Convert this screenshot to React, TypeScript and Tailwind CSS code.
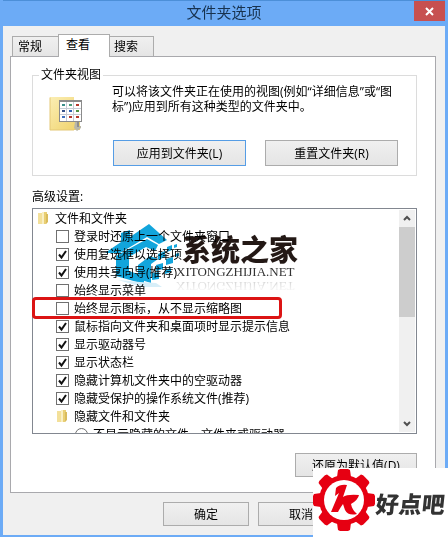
import { ReactNode } from "react";

type Item = { label: string; checked: boolean };

const items: Item[] = [
  { label: "登录时还原上一个文件夹窗口", checked: false },
  { label: "使用复选框以选择项", checked: true },
  { label: "使用共享向导(推荐)", checked: true },
  { label: "始终显示菜单", checked: false },
  { label: "始终显示图标，从不显示缩略图", checked: false },
  { label: "鼠标指向文件夹和桌面项时显示提示信息", checked: true },
  { label: "显示驱动器号", checked: true },
  { label: "显示状态栏", checked: true },
  { label: "隐藏计算机文件夹中的空驱动器", checked: true },
  { label: "隐藏受保护的操作系统文件(推荐)", checked: true },
];

function SmallFolder() {
  return (
    <svg width="12" height="14" viewBox="0 0 12 14" className="shrink-0" aria-hidden="true">
      <path d="M1 2h5v11H1z" fill="#f3e09a" />
      <path d="M5 1h5v10l-1 2H5z" fill="#e9cf74" />
      <path d="M5 1h2v12H5z" fill="#f9efc4" />
      <path d="M9 3h2v8l-2 2z" fill="#d9bb5c" />
    </svg>
  );
}

function BigFolder() {
  const dots = ["#3b8f8a", "#4b9a78", "#b5382d", "#35518a", "#2f62b5", "#4f9446", "#3e6fbd", "#b5382d", "#b5382d"];
  return (
    <svg width="34" height="36" viewBox="0 0 34 36" className="shrink-0" aria-hidden="true">
      <defs>
        <linearGradient id="folder" x1="0" y1="0" x2="1" y2="1">
          <stop offset="0" stopColor="#fbeeb4" />
          <stop offset="1" stopColor="#efd168" />
        </linearGradient>
      </defs>
      <path d="M1 1h24v3h6v30H1z" fill="url(#folder)" />
      <path d="M1 1.5V34h24l3-3" fill="none" stroke="#e4c876" />
      <path d="M26 26h3v4h3v2l-4 3-3-3z" fill="#b9b7a8" />
      <path d="M28 25h2v6h-2z" fill="#8f8f8f" />
      <rect x="10.5" y="4.5" width="22" height="21" fill="#fff" stroke="#8b8b8b" />
      <path d="M10 4h23v2H10z" fill="#8b8b8b" />
      <path d="M17.5 6v19M24.5 6v19M11 12.5h21M11 18.5h21" stroke="#c7ccd6" />
      {dots.map((c, i) => (
        <rect key={i} x={13 + (i % 3) * 7} y={8 + Math.floor(i / 3) * 6} width="3" height="2" fill={c} />
      ))}
    </svg>
  );
}

function PushButton({ children, className = "" }: { children: ReactNode; className?: string }) {
  return (
    <button
      type="button"
      className={`shrink-0 whitespace-nowrap border bg-linear-to-b from-[#f0f0f0] to-[#e5e5e5] text-center ${className}`}
    >
      {children}
    </button>
  );
}

function CheckRow({ item, id }: { item: Item; id: string }) {
  return (
    <li className="flex h-[18px] items-center gap-[5px] pl-[23px]">
      <span className="grid shrink-0">
        <input
          id={id}
          type="checkbox"
          defaultChecked={item.checked}
          className="peer col-start-1 row-start-1 size-[13px] appearance-none border border-[#707070] bg-white"
        />
        <svg
          viewBox="0 0 13 13"
          className="pointer-events-none invisible col-start-1 row-start-1 size-[13px] peer-checked:visible"
          aria-hidden="true"
        >
          <path d="M3 6.5l2.5 3L10 3" fill="none" stroke="#111" strokeWidth="2" />
        </svg>
      </span>
      <label htmlFor={id} className="whitespace-nowrap">
        {item.label}
      </label>
    </li>
  );
}

function SiteMark() {
  return (
    <div className="pointer-events-none absolute top-[14px] left-[71px] flex items-start mix-blend-multiply">
      <svg width="76" height="66" viewBox="0 0 76 66" aria-hidden="true">
        <g fill="#12a5dc">
          <path d="M1 30L17 19V10l9-3v7L45 1l18 16-8 4-12-7-27 16z" />
          <path d="M12 33L43 16l11 6-3 6-9-4-17 10v14l15 5v8L12 53z" />
          <path d="M34 42l12-9 8 3-7 5v19l-13-4z" />
          <path d="M54 31l7-3v6l-7 3zM63 24l5-2v5l-5 2zM70 22l3-1v3l-3 1zM62 36l7-2v6l-7 2zM52 42l7-2v6l-7 2zM61 47l6-2v4l-6 2zM71 31l4-1v3l-4 1zM48 50l7-1v7l-7 1z" />
        </g>
        <path d="M14 57l24 7h20l-6-4-16-1z" fill="#d7eef8" />
      </svg>
      <div className="-ml-1 pt-3">
        <p className="pl-[6px] text-[29px] leading-[30px] font-black whitespace-nowrap text-[#231815]">系统之家</p>
        <p className="font-['Liberation_Serif',serif] text-[13px] leading-[14px] text-[#333]">XITONGZHIJIA.NET</p>
        <p
          aria-hidden="true"
          className="-scale-y-100 bg-linear-to-t from-[#ccc] to-white bg-clip-text font-['Liberation_Serif',serif] text-[13px] leading-[14px] text-transparent"
        >
          XITONGZHIJIA.NET
        </p>
      </div>
    </div>
  );
}

function CornerLogo() {
  return (
    <div className="absolute right-0 bottom-0 flex h-[70px] w-[135px] items-start bg-white">
      <svg width="62" height="64" viewBox="-31 -32 62 64" className="shrink-0" aria-hidden="true">
        <g fill="#e60012">
          {[0, 45, 90, 135].map((a) => (
            <path key={a} transform={`rotate(${a})`} d="M-4-31h8l2 1 1 7v46l-1 7-2 1h-8l-2-1-1-7v-46l1-7z" />
          ))}
          <circle r="25" />
        </g>
        <circle r="20" fill="#fff" />
        <path
          d="M-8-12Q-4-16 3-15L-1-3Q3-6 15-5Q14 0 7 4Q8 10 13 14Q4 16 1 10Q0 7-1 4Q-4 8-6 12H-13L-5-7L-9-4z"
          fill="#e60012"
        />
      </svg>
      <span className="-skew-x-6 pt-[22px] pl-[2px] text-[23px] leading-[28px] font-black whitespace-nowrap text-[#333]">好点吧</span>
    </div>
  );
}

export default function App() {
  return (
    <div className="relative overflow-hidden font-['Open_Sans','Noto_Sans_CJK_SC',sans-serif] text-[12px] leading-[15px] text-black">
      <main className="border-x-3 border-b-3 border-[#6cabf6] bg-[#f0f0f0]">
        <header className="relative flex h-[26px] items-start justify-center border-t border-[#4c8fd8] bg-[#6cabf6] pt-px">
          <h1 className="text-[15px] leading-[20px] text-[#17324f]">文件夹选项</h1>
          <button
            type="button"
            aria-label="关闭"
            className="absolute top-0 right-0 flex h-[20px] w-[31px] items-center justify-center bg-[#c75050]"
          >
            <svg width="9" height="9" viewBox="0 0 9 9" aria-hidden="true">
              <path d="M1 1l7 7M8 1L1 8" stroke="#fff" strokeWidth="2" />
            </svg>
          </button>
        </header>

        <div className="pt-2 pr-[9px] pb-[9px] pl-[7px]">
          <div role="tablist" className="flex h-[22px] items-end pl-[2px]">
            <button type="button" role="tab" aria-selected="false" className="h-5 w-[47px] border border-b-0 border-[#acacac] bg-linear-to-b from-[#f0f0f0] to-[#e5e5e5] pr-[11px] whitespace-nowrap">
              常规
            </button>
            <button type="button" role="tab" aria-selected="true" className="z-10 -mx-px -mb-px h-[23px] w-[52px] border border-b-0 border-[#acacac] bg-white pr-3 pb-1">
              查看
            </button>
            <button type="button" role="tab" aria-selected="false" className="h-5 w-[45px] border border-b-0 border-[#acacac] bg-linear-to-b from-[#f0f0f0] to-[#e5e5e5] pr-[11px] whitespace-nowrap">
              搜索
            </button>
          </div>

          <section className="border border-[#a9a9ad] bg-white pt-[10px] pr-[18px] pb-[15px] pl-[21px]">
            <fieldset className="min-w-0 border border-[#dcdcdc] pr-[18px] pb-[9px] pl-4">
              <legend className="-ml-[10px] px-[2px] leading-[16px]">文件夹视图</legend>
              <div className="flex items-start gap-[29px]">
                <div className="pt-[13px]">
                  <BigFolder />
                </div>
                <div className="min-w-0 flex-1">
                  <p className="-mr-2 h-[57px] pt-[1px]">
                    可以将该文件夹正在使用的视图(例如“详细信息”或“图
                    <br />
                    标”)应用到所有这种类型的文件夹中。
                  </p>
                  <div className="flex justify-end gap-[19px]">
                    <PushButton className="h-[26px] w-[133px] border-[#569de5]">应用到文件夹(L)</PushButton>
                    <PushButton className="h-[26px] w-[133px] border-[#acacac]">重置文件夹(R)</PushButton>
                  </div>
                </div>
              </div>
            </fieldset>

            <h2 className="pt-[13px] pb-1">高级设置:</h2>

            <div className="relative flex h-[226px] border border-[#828790] bg-white">
              <ul className="min-w-0 flex-1 overflow-hidden">
                <li className="flex h-[18px] items-center gap-[6px] pl-1">
                  <SmallFolder />
                  文件和文件夹
                </li>
                {items.map((item, i) => (
                  <CheckRow key={item.label} item={item} id={`option-${i}`} />
                ))}
                <li className="flex h-[18px] items-center gap-[6px] pl-[23px]">
                  <SmallFolder />
                  隐藏文件和文件夹
                </li>
                <li className="flex h-[18px] items-center gap-[5px] pl-[42px]">
                  <input
                    id="hide-files"
                    type="radio"
                    className="size-[13px] shrink-0 appearance-none rounded-full border border-[#707070] bg-white"
                  />
                  <label htmlFor="hide-files" className="whitespace-nowrap">
                    不显示隐藏的文件、文件夹或驱动器
                  </label>
                </li>
              </ul>
              <div className="my-px mr-px flex w-4 flex-col bg-[#f0f0f0]">
                <button type="button" aria-label="向上滚动" className="flex h-[17px] items-center justify-center">
                  <svg width="8" height="7" viewBox="0 0 8 7" aria-hidden="true">
                    <path d="M1 5l3-3 3 3" fill="none" stroke="#505050" strokeWidth="2" />
                  </svg>
                </button>
                <div className="h-[90px] bg-[#cdcdcd]" />
                <button type="button" aria-label="向下滚动" className="mt-auto flex h-[17px] items-center justify-center">
                  <svg width="8" height="7" viewBox="0 0 8 7" aria-hidden="true">
                    <path d="M1 2l3 3 3-3" fill="none" stroke="#505050" strokeWidth="2" />
                  </svg>
                </button>
              </div>
              <SiteMark />
              <div className="pointer-events-none absolute top-[88px] -left-px h-[22px] w-[250px] rounded-sm border-3 border-[#dc1414]" />
            </div>

            <div className="flex justify-end pt-[19px]">
              <PushButton className="h-6 w-[122px] border-[#acacac]">还原为默认值(D)</PushButton>
            </div>
          </section>

          <footer className="flex justify-end gap-[9px] pt-[9px]">
            <PushButton className="h-6 w-[86px] border-[#acacac]">确定</PushButton>
            <PushButton className="h-6 w-[86px] border-[#acacac]">取消</PushButton>
            <PushButton className="h-6 w-[83px] border-[#acacac]">应用(A)</PushButton>
          </footer>
        </div>
      </main>
      <CornerLogo />
    </div>
  );
}
